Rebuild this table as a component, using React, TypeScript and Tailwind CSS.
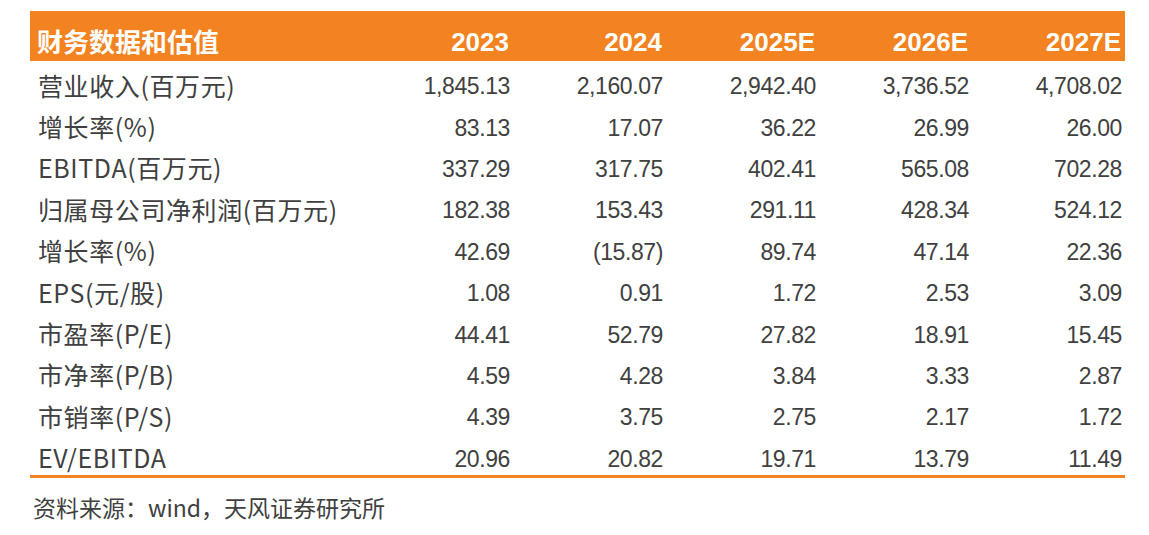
import React from "react";

const cjk = "font-['Noto_Sans_CJK_SC','Noto_Sans',sans-serif]";
const num = "font-['Liberation_Sans',Arial,sans-serif]";

const years = ["2023", "2024", "2025E", "2026E", "2027E"];

const rows: [string, string[]][] = [
  ["营业收入(百万元)", ["1,845.13", "2,160.07", "2,942.40", "3,736.52", "4,708.02"]],
  ["增长率(%)", ["83.13", "17.07", "36.22", "26.99", "26.00"]],
  ["EBITDA(百万元)", ["337.29", "317.75", "402.41", "565.08", "702.28"]],
  ["归属母公司净利润(百万元)", ["182.38", "153.43", "291.11", "428.34", "524.12"]],
  ["增长率(%)", ["42.69", "(15.87)", "89.74", "47.14", "22.36"]],
  ["EPS(元/股)", ["1.08", "0.91", "1.72", "2.53", "3.09"]],
  ["市盈率(P/E)", ["44.41", "52.79", "27.82", "18.91", "15.45"]],
  ["市净率(P/B)", ["4.59", "4.28", "3.84", "3.33", "2.87"]],
  ["市销率(P/S)", ["4.39", "3.75", "2.75", "2.17", "1.72"]],
  ["EV/EBITDA", ["20.96", "20.82", "19.71", "13.79", "11.49"]],
];

export default function App() {
  return (
    <div className="w-[1149px] h-[535px] bg-white overflow-hidden">
      <div className="ml-[30px] mt-[11px] w-[1095px]">
        <div className="grid grid-cols-[327px_repeat(5,153px)] h-[50px] bg-[#f38220] text-white">
          <div className={`${cjk} pl-[7px] pt-[10px] text-[26px] font-bold leading-[30px] flex items-center`}>
            财务数据和估值
          </div>
          {years.map((y) => (
            <div
              key={y}
              className={`${num} pr-[1px] pt-[12px] text-[26px] font-bold leading-[30px] flex items-center justify-end`}
            >
              {y}
            </div>
          ))}
        </div>
        <div className="border-b-[3px] border-[#f38220]">
          {rows.map(([label, vals], i) => (
            <div key={i} className="grid grid-cols-[327px_repeat(5,153px)] h-[41.4px] text-[#404040]">
              <div className={`${cjk} pl-[8px] pt-[6px] text-[25px] tracking-[0.6px] leading-[30px] flex items-center whitespace-nowrap`}>
                {label}
              </div>
              {vals.map((v, j) => (
                <div
                  key={j}
                  className={`${num} pt-[9px] text-[23px] tracking-[-0.4px] leading-[28px] flex items-center justify-end`}
                >
                  {v}
                </div>
              ))}
            </div>
          ))}
        </div>
        <div className={`${cjk} mt-[14px] pl-[3px] text-[23px] leading-[30px] text-[#404040]`}>
          资料来源：wind，天风证券研究所
        </div>
      </div>
    </div>
  );
}
